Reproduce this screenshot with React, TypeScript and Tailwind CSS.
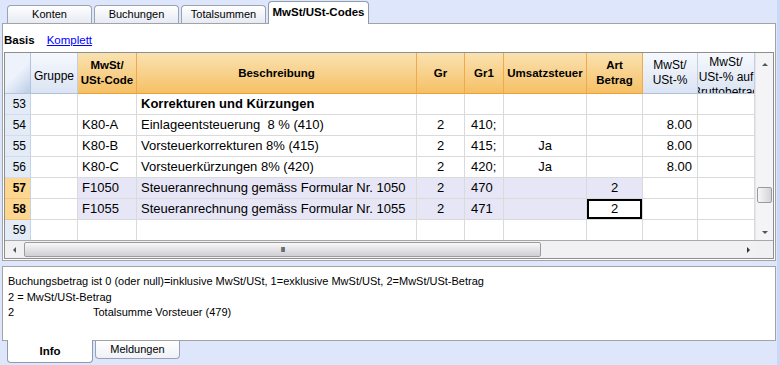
import React from "react";

type Row = {
  n: number;
  code?: string;
  desc?: string;
  bold?: boolean;
  gr?: string;
  gr1?: string;
  ust?: string;
  art?: string;
  pct?: string;
  sel?: boolean;
  focus?: boolean;
};

const rows: Row[] = [
  { n: 53, desc: "Korrekturen und Kürzungen", bold: true },
  { n: 54, code: "K80-A", desc: "Einlageentsteuerung  8 % (410)", gr: "2", gr1: "410;", pct: "8.00" },
  { n: 55, code: "K80-B", desc: "Vorsteuerkorrekturen 8% (415)", gr: "2", gr1: "415;", ust: "Ja", pct: "8.00" },
  { n: 56, code: "K80-C", desc: "Vorsteuerkürzungen 8% (420)", gr: "2", gr1: "420;", ust: "Ja", pct: "8.00" },
  { n: 57, code: "F1050", desc: "Steueranrechnung gemäss Formular Nr. 1050", gr: "2", gr1: "470", art: "2", sel: true },
  { n: 58, code: "F1055", desc: "Steueranrechnung gemäss Formular Nr. 1055", gr: "2", gr1: "471", art: "2", sel: true, focus: true },
  { n: 59 },
];

const cell = "h-[21px] shrink-0 border-r border-b border-[#dadada] overflow-hidden whitespace-pre flex items-center";

function TopTab({ label, active }: { label: string; active?: boolean }) {
  if (active) {
    return (
      <div className="relative z-10 -mb-px h-[23px] w-[101px] rounded-t-[4px] border border-b-0 border-[#8f9aae] bg-white flex items-center justify-center text-[11.5px] font-bold text-black">
        {label}
      </div>
    );
  }
  return (
    <div className="h-[18px] w-[85px] rounded-t-[4px] border border-b-0 border-[#9aa3b6] bg-gradient-to-b from-white to-[#e6eaf3] flex items-center justify-center text-[11px] text-black">
      {label}
    </div>
  );
}

function OrangeHead({ w, children }: { w: string; children: React.ReactNode }) {
  return (
    <div
      className={`${w} h-[41px] shrink-0 border-r border-b border-r-[#f2a94c] border-b-[#ef9f3a] bg-gradient-to-b from-[#fae2b0] to-[#f5c064] flex flex-col items-center justify-center text-[11.5px] font-bold leading-[15px] text-black text-center`}
    >
      {children}
    </div>
  );
}

function BlueHead({ w, extra, children }: { w: string; extra?: string; children: React.ReactNode }) {
  return (
    <div
      className={`${w} h-[41px] shrink-0 overflow-hidden border-r border-b border-r-[#c2cfe3] border-b-[#aebfd9] bg-gradient-to-b from-[#f6f8fd] to-[#dbe4f3] flex flex-col items-center justify-center text-[12px] leading-[15px] text-black text-center whitespace-nowrap ${extra ?? ""}`}
    >
      {children}
    </div>
  );
}

export default function App() {
  return (
    <div
      className="w-[780px] h-[365px] overflow-hidden bg-[#dee6fb] border-r-[3px] border-[#c9d8f5] text-black"
      style={{ fontFamily: '"Liberation Sans", Arial, sans-serif' }}
    >
      {/* Top tabs */}
      <div className="h-[23px] pl-[7px] flex items-end gap-[2px]">
        <TopTab label="Konten" />
        <TopTab label="Buchungen" />
        <TopTab label="Totalsummen" />
        <TopTab label="MwSt/USt-Codes" active />
      </div>

      {/* Main panel */}
      <div className="ml-[2px] w-[774px] h-[238px] border border-[#a3a3a3] bg-white">
        <div className="h-[28px] pl-[1px] pt-[10px] flex gap-[12px] text-[11.5px] leading-[13px]">
          <span className="font-bold">Basis</span>
          <span className="text-[#0000ff] underline">Komplett</span>
        </div>

        {/* Grid */}
        <div className="ml-px w-[770px] border border-[#8e8e8e] flex flex-col">
          <div className="flex">
            <div className="w-[750px] h-[187px] overflow-hidden flex flex-col">
              {/* Header */}
              <div className="flex">
                <div className="w-[26px] h-[41px] shrink-0 border-r border-b border-[#b4c4dc] bg-[linear-gradient(135deg,#eef3fb_50%,#bccde7)]" />
                <BlueHead w="w-[47px]">
                  <span className="pt-[6px]">Gruppe</span>
                </BlueHead>
                <OrangeHead w="w-[59px]">
                  <span>MwSt/</span>
                  <span>USt-Code</span>
                </OrangeHead>
                <OrangeHead w="w-[280px]">Beschreibung</OrangeHead>
                <OrangeHead w="w-[48px]">Gr</OrangeHead>
                <OrangeHead w="w-[39px]">Gr1</OrangeHead>
                <OrangeHead w="w-[83px]">Umsatzsteuer</OrangeHead>
                <OrangeHead w="w-[56px]">
                  <span>Art</span>
                  <span>Betrag</span>
                </OrangeHead>
                <BlueHead w="w-[55px]">
                  <span>MwSt/</span>
                  <span>USt-%</span>
                </BlueHead>
                <BlueHead w="w-[57px]" extra="pt-[8px] leading-[14px]">
                  <span>MwSt/</span>
                  <span>USt-% auf</span>
                  <span>Bruttobetrag</span>
                </BlueHead>
              </div>

              {/* Rows */}
              {rows.map((r) => {
                const lav = r.sel ? "bg-[#e6e6f6]" : "";
                return (
                  <div key={r.n} className="flex text-[13px]">
                    <div
                      className={`${cell} w-[26px] justify-end pr-[4px] text-[12px] border-r-[#c5d2e6] ${
                        r.sel ? "bg-[#fdd68f] font-bold border-b-[#f0c27a]" : "bg-[#e3ebf7] border-b-[#d3dcea]"
                      }`}
                    >
                      {r.n}
                    </div>
                    <div className={`${cell} w-[47px]`} />
                    <div className={`${cell} w-[59px] pl-[4px] ${lav}`}>{r.code}</div>
                    <div className={`${cell} w-[280px] pl-[4px] ${lav} ${r.bold ? "font-bold" : ""}`}>{r.desc}</div>
                    <div className={`${cell} w-[48px] justify-center ${lav}`}>{r.gr}</div>
                    <div className={`${cell} w-[39px] pl-[6px] ${lav}`}>{r.gr1}</div>
                    <div className={`${cell} w-[83px] justify-center ${lav}`}>{r.ust}</div>
                    <div
                      className={`${cell} w-[56px] justify-center ${
                        r.focus ? "bg-white shadow-[inset_0_0_0_2px_#000]" : lav
                      }`}
                    >
                      {r.art}
                    </div>
                    <div className={`${cell} w-[55px] justify-end pr-[5px]`}>{r.pct}</div>
                    <div className={`${cell} w-[57px]`} />
                  </div>
                );
              })}
            </div>

            {/* Vertical scrollbar */}
            <div className="w-[18px] h-[187px] bg-[#f4f4f6] border-l border-[#e6e6ea] flex flex-col items-center">
              <div className="h-[16px] mt-[3px] flex items-center justify-center">
                <div className="w-0 h-0 border-l-[3px] border-r-[3px] border-b-[3px] border-l-transparent border-r-transparent border-b-[#555]" />
              </div>
              <div className="h-[115px]" />
              <div className="w-[15px] h-[16px] rounded-[2px] border border-[#9a9a9a] bg-gradient-to-r from-[#f7f7f7] to-[#d4d4d8]" />
              <div className="flex-1 flex items-end pb-[6px]">
                <div className="w-0 h-0 border-l-[3px] border-r-[3px] border-t-[3px] border-l-transparent border-r-transparent border-t-[#555]" />
              </div>
            </div>
          </div>

          {/* Horizontal scrollbar */}
          <div className="flex h-[18px] border-t border-[#a8a8a8]">
            <div className="w-[750px] flex items-center bg-[#f1f1f4]">
              <div className="w-[19px] flex justify-center">
                <div className="w-0 h-0 border-t-[3px] border-b-[3px] border-r-[3px] border-t-transparent border-b-transparent border-r-[#555]" />
              </div>
              <div className="w-[517px] h-[15px] rounded-[2px] border border-[#9c9c9c] bg-gradient-to-b from-[#f8f8f9] to-[#cfcfd4] flex items-center justify-center">
                <span className="text-[8px] leading-[8px] font-bold text-[#555] tracking-[-1px]">III</span>
              </div>
              <div className="flex-1" />
              <div className="w-[14px] flex justify-center">
                <div className="w-0 h-0 border-t-[3px] border-b-[3px] border-l-[3px] border-t-transparent border-b-transparent border-l-[#333]" />
              </div>
            </div>
            <div className="w-[18px] bg-[#f0f0f2]" />
          </div>
        </div>
      </div>

      {/* Info panel */}
      <div className="mt-[5px] ml-[2px] w-[774px] h-[75px] border border-[#a3a3a3] bg-white px-[5px] pt-[7px] text-[11px] leading-[15.5px]">
        <div>Buchungsbetrag ist 0 (oder null)=inklusive MwSt/USt, 1=exklusive MwSt/USt, 2=MwSt/USt-Betrag</div>
        <div>2 = MwSt/USt-Betrag</div>
        <div className="flex">
          <span className="w-[85px]">2</span>
          <span>Totalsumme Vorsteuer (479)</span>
        </div>
      </div>

      {/* Bottom tabs */}
      <div className="pl-[7px] flex items-start gap-[2px]">
        <div className="relative z-10 -mt-px h-[23px] w-[86px] rounded-b-[4px] border border-t-0 border-[#8f9aae] bg-white flex items-center justify-center pt-[2px] text-[11.5px] font-bold">
          Info
        </div>
        <div className="h-[18px] w-[85px] rounded-b-[4px] border border-t-0 border-[#9aa3b6] bg-gradient-to-b from-white to-[#eef1f7] flex items-center justify-center text-[11px]">
          Meldungen
        </div>
      </div>
    </div>
  );
}
